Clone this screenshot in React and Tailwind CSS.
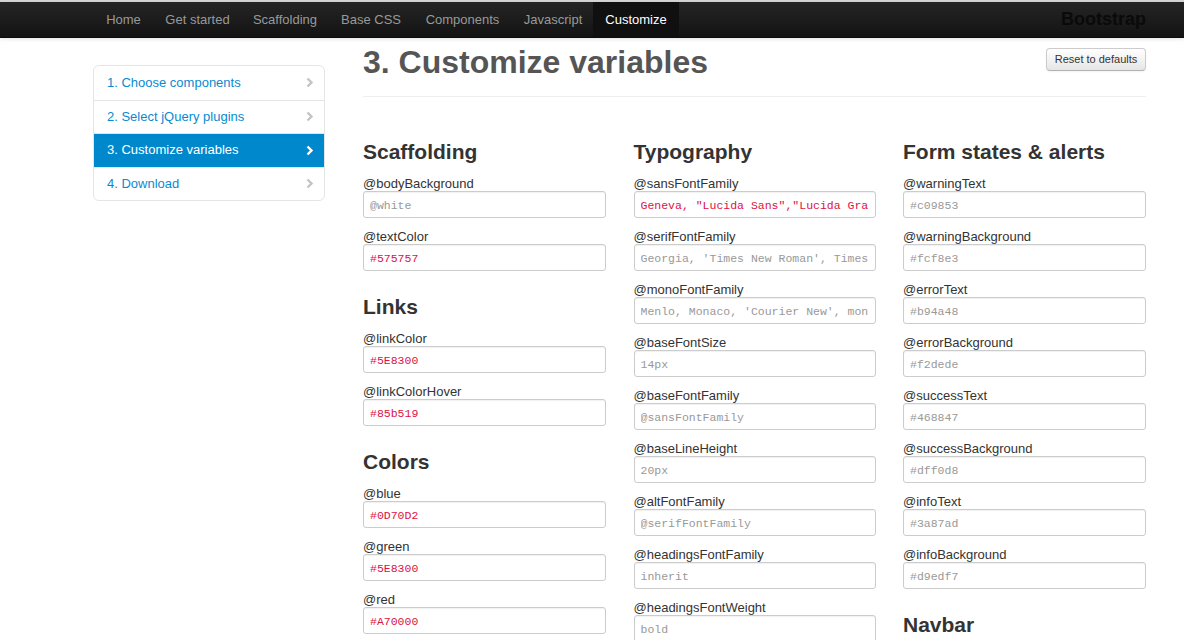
import React from "react";

const navItems = [
  { label: "Home", w: "w-[61px]" },
  { label: "Get started", w: "w-[87px]" },
  { label: "Scaffolding", w: "w-[88px]" },
  { label: "Base CSS", w: "w-[84px]" },
  { label: "Components", w: "w-[99px]" },
  { label: "Javascript", w: "w-[82px]" },
];

const steps = [
  { label: "1. Choose components", active: false },
  { label: "2. Select jQuery plugins", active: false },
  { label: "3. Customize variables", active: true },
  { label: "4. Download", active: false },
];

const col1 = [
  {
    title: "Scaffolding",
    fields: [
      { name: "@bodyBackground", ph: "@white" },
      { name: "@textColor", val: "#575757" },
    ],
  },
  {
    title: "Links",
    fields: [
      { name: "@linkColor", val: "#5E8300" },
      { name: "@linkColorHover", val: "#85b519" },
    ],
  },
  {
    title: "Colors",
    fields: [
      { name: "@blue", val: "#0D70D2" },
      { name: "@green", val: "#5E8300" },
      { name: "@red", val: "#A70000" },
    ],
  },
];

const col2 = [
  {
    title: "Typography",
    fields: [
      { name: "@sansFontFamily", val: 'Geneva, "Lucida Sans","Lucida Grande", sans-serif' },
      { name: "@serifFontFamily", ph: "Georgia, 'Times New Roman', Times, serif" },
      { name: "@monoFontFamily", ph: "Menlo, Monaco, 'Courier New', monospace" },
      { name: "@baseFontSize", ph: "14px" },
      { name: "@baseFontFamily", ph: "@sansFontFamily" },
      { name: "@baseLineHeight", ph: "20px" },
      { name: "@altFontFamily", ph: "@serifFontFamily" },
      { name: "@headingsFontFamily", ph: "inherit" },
      { name: "@headingsFontWeight", ph: "bold" },
    ],
  },
];

const col3 = [
  {
    title: "Form states & alerts",
    fields: [
      { name: "@warningText", ph: "#c09853" },
      { name: "@warningBackground", ph: "#fcf8e3" },
      { name: "@errorText", ph: "#b94a48" },
      { name: "@errorBackground", ph: "#f2dede" },
      { name: "@successText", ph: "#468847" },
      { name: "@successBackground", ph: "#dff0d8" },
      { name: "@infoText", ph: "#3a87ad" },
      { name: "@infoBackground", ph: "#d9edf7" },
    ],
  },
  {
    title: "Navbar",
    fields: [],
  },
];

function Chevron({ active }) {
  return (
    <svg width="8" height="11" viewBox="0 0 8 11" className="shrink-0">
      <path
        d="M1.5 1.5 L5.5 5.5 L1.5 9.5"
        fill="none"
        stroke={active ? "#ffffff" : "#c4c4c4"}
        strokeWidth="2.4"
      />
    </svg>
  );
}

function Field({ f }) {
  return (
    <div className="mb-[9px]">
      <div className="text-[13px] leading-[17px] text-[#333] pt-[1px] h-[17px]">{f.name}</div>
      <input
        type="text"
        readOnly
        defaultValue={f.val || ""}
        placeholder={f.ph || ""}
        className="block w-full h-[27px] border border-[#cccccc] rounded-[3px] pl-[6px] pr-[7px] pt-[1px] bg-white font-['Liberation_Mono','Courier_New',monospace] text-[11.5px] text-[#dd1144] placeholder:text-[#999999] shadow-[inset_0_1px_1px_rgba(0,0,0,0.06)] outline-none"
      />
    </div>
  );
}

function Column({ sections }) {
  return (
    <div className="flex flex-col">
      {sections.map((s) => (
        <div key={s.title}>
          <h3 className="mt-[12px] mb-[7px] text-[21px] leading-[30px] font-bold text-[#333]">
            {s.title}
          </h3>
          {s.fields.map((f) => (
            <Field key={f.name} f={f} />
          ))}
        </div>
      ))}
    </div>
  );
}

export default function App() {
  return (
    <div className="h-[640px] overflow-hidden bg-white font-['Liberation_Sans',Arial,sans-serif]">
      <div className="h-[2px] bg-[#d6d6d6]" />
      <nav className="relative z-10 h-[36px] bg-gradient-to-b from-[#252525] to-[#131313] border-b border-[#0c0c0c] shadow-[0_1px_4px_rgba(0,0,0,0.12)]">
        <div className="ml-[93px] w-[1053px] h-full flex items-stretch justify-between">
          <ul className="flex items-stretch h-full">
            {navItems.map((n) => (
              <li
                key={n.label}
                className={`${n.w} flex items-center justify-center text-[13px] text-[#999999]`}
              >
                {n.label}
              </li>
            ))}
            <li className="w-[86px] ml-[-1px] flex items-center justify-center text-[13px] text-white bg-[#101010]">
              Customize
            </li>
          </ul>
          <div className="flex items-center text-[18px] font-bold text-[#0a0a0a]">Bootstrap</div>
        </div>
      </nav>

      <div className="ml-[93px] w-[1053px] flex">
        <aside className="w-[232px] shrink-0 mt-[27px]">
          <ul className="border border-[#e5e5e5] rounded-[6px] overflow-hidden bg-white">
            {steps.map((s, i) => (
              <li
                key={s.label}
                className={`h-[33.5px] flex items-center justify-between pl-[13px] pr-[10px] text-[13px] ${
                  i > 0 ? "border-t border-[#e5e5e5]" : ""
                } ${s.active ? "bg-[#0088cc] text-white border-[#0088cc]" : "text-[#0a8ad0]"}`}
              >
                <span className="mt-[-1px]">{s.label}</span>
                <Chevron active={s.active} />
              </li>
            ))}
          </ul>
        </aside>

        <main className="ml-[38px] w-[783px]">
          <div className="pt-[4px] pb-[14px] border-b border-[#eeeeee] flex items-start justify-between">
            <h1 className="text-[32px] leading-[40px] font-bold text-[#555555]">
              3. Customize variables
            </h1>
            <button className="mt-[6px] h-[23px] w-[100px] rounded-[4px] border border-[#cccccc] border-b-[#b3b3b3] bg-gradient-to-b from-white to-[#e6e6e6] text-[11px] text-[#333] shadow-[inset_0_1px_0_rgba(255,255,255,0.2),0_1px_2px_rgba(0,0,0,0.05)]">
              Reset to defaults
            </button>
          </div>
          <div className="pt-[28px] grid grid-cols-[243px_242px_243px] gap-x-[27.5px]">
            <Column sections={col1} />
            <Column sections={col2} />
            <Column sections={col3} />
          </div>
        </main>
      </div>
    </div>
  );
}
